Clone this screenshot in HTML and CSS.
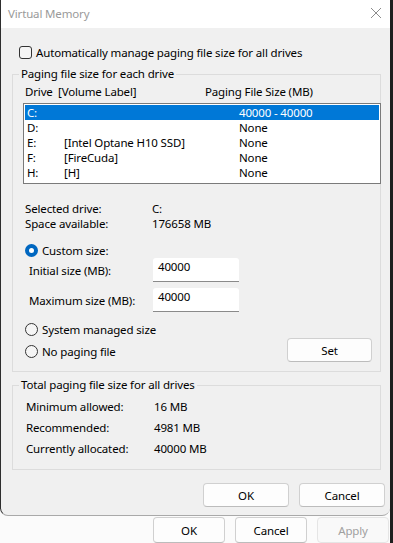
FILE: index.html
```html
<!DOCTYPE html>
<html lang="en">
<head>
    <meta charset="UTF-8">
    <meta name="viewport" content="width=device-width, initial-scale=1.0">
    <title>Virtual Memory</title>
    <link rel="stylesheet" href="styles.css">
</head>
<body>
    <div class="screen">
        <div class="window">
            <div class="dialog">
                <div class="titlebar">
                    <span class="title">Virtual Memory</span>
                    <svg class="close" width="12" height="12" viewBox="0 0 12 12">
                        <path d="M1 1 L11 11 M11 1 L1 11" stroke="#8c8c8c" stroke-width="1" fill="none"/>
                    </svg>
                </div>
                <div class="content">
                    <div class="check-row">
                        <span class="checkbox"></span>
                        <span>Automatically manage paging file size for all drives</span>
                    </div>

                    <fieldset class="group group-drives">
                        <legend>Paging file size for each drive</legend>
                        <div class="list-head">
                            <span class="col-drive">Drive</span>
                            <span class="col-label">[Volume Label]</span>
                            <span class="col-size">Paging File Size (MB)</span>
                        </div>
                        <div class="listbox">
                            <div class="list-row selected">
                                <span class="cell-drive">C:</span>
                                <span class="cell-label"></span>
                                <span class="cell-size">40000 - 40000</span>
                            </div>
                            <div class="list-row">
                                <span class="cell-drive">D:</span>
                                <span class="cell-label"></span>
                                <span class="cell-size">None</span>
                            </div>
                            <div class="list-row">
                                <span class="cell-drive">E:</span>
                                <span class="cell-label">[Intel Optane H10 SSD]</span>
                                <span class="cell-size">None</span>
                            </div>
                            <div class="list-row">
                                <span class="cell-drive">F:</span>
                                <span class="cell-label">[FireCuda]</span>
                                <span class="cell-size">None</span>
                            </div>
                            <div class="list-row">
                                <span class="cell-drive">H:</span>
                                <span class="cell-label">[H]</span>
                                <span class="cell-size">None</span>
                            </div>
                        </div>

                        <div class="info">
                            <div class="info-row"><span class="info-key">Selected drive:</span><span>C:</span></div>
                            <div class="info-row"><span class="info-key">Space available:</span><span>176658 MB</span></div>
                        </div>

                        <div class="radio-row custom">
                            <span class="radio checked"></span>
                            <span>Custom size:</span>
                        </div>
                        <div class="size-row">
                            <span class="size-label">Initial size (MB):</span>
                            <div class="textbox">40000</div>
                        </div>
                        <div class="size-row">
                            <span class="size-label">Maximum size (MB):</span>
                            <div class="textbox">40000</div>
                        </div>

                        <div class="options">
                            <div class="option-list">
                                <div class="radio-row">
                                    <span class="radio"></span>
                                    <span>System managed size</span>
                                </div>
                                <div class="radio-row">
                                    <span class="radio"></span>
                                    <span>No paging file</span>
                                </div>
                            </div>
                            <button class="btn btn-set">Set</button>
                        </div>
                    </fieldset>

                    <fieldset class="group group-total">
                        <legend>Total paging file size for all drives</legend>
                        <div class="total-row"><span class="total-key">Minimum allowed:</span><span>16 MB</span></div>
                        <div class="total-row"><span class="total-key">Recommended:</span><span>4981 MB</span></div>
                        <div class="total-row"><span class="total-key">Currently allocated:</span><span>40000 MB</span></div>
                    </fieldset>

                    <div class="dialog-buttons">
                        <button class="btn btn-dialog">OK</button>
                        <button class="btn btn-dialog">Cancel</button>
                    </div>
                </div>
            </div>

            <div class="parent-buttons">
                <button class="btn btn-parent">OK</button>
                <button class="btn btn-parent">Cancel</button>
                <button class="btn btn-parent disabled">Apply</button>
            </div>
        </div>
        <div class="edge"></div>
    </div>
</body>
</html>
```

FILE: styles.css
```css
body {
    margin: 0;
    font-family: 'Noto Sans', 'Open Sans', sans-serif;
    font-size: 11.5px;
    letter-spacing: -0.15px;
    color: #000;
    background: #fbfbfb;
}

.screen {
    display: flex;
    width: 393px;
    height: 543px;
    overflow: hidden;
}

.window {
    width: 390px;
    display: flex;
    flex-direction: column;
}

.edge {
    width: 3px;
    background: #1e1e1e;
}

/* dialog window */
.dialog {
    height: 519px;
    box-sizing: border-box;
    border-left: 1px solid #2e2e2e;
    border-bottom: 1px solid #a9a9a9;
    border-radius: 0 0 8px 8px;
    background: #f0f0f0;
    overflow: hidden;
}

.titlebar {
    height: 28px;
    background: #fff;
    display: flex;
    align-items: center;
    justify-content: space-between;
    padding: 0 8px 0 7px;
}

.title {
    color: #9a9a9a;
    margin-top: -2px;
}

.close {
    margin-top: -2px;
}

.content {
    padding: 0 5px 0 11px;
}

.check-row {
    display: flex;
    align-items: center;
    height: 16px;
    margin: 16px 0 0 7px;
    gap: 4px;
}

.checkbox {
    width: 11px;
    height: 11px;
    border: 1px solid #333;
    border-radius: 3px;
    background: #f5f5f5;
}

/* group boxes */
.group {
    margin: 6px 4px 0 0;
    padding: 0;
    border: 1px solid #dcdcdc;
    min-width: 0;
}

.group legend {
    margin-left: 6px;
    padding: 0 2px;
    line-height: 16px;
}

.list-head {
    display: flex;
    height: 16px;
    line-height: 16px;
    margin-top: 2px;
    padding-left: 12px;
}

.col-drive {
    width: 33px;
}

.col-label {
    width: 147px;
}

.listbox {
    margin: 3px -1px 0 10px;
    border: 1px solid #7a7a7a;
    background: #fff;
    padding: 1px 1px 3px;
}

.list-row {
    display: flex;
    height: 15px;
    line-height: 15px;
    padding-left: 2px;
}

.list-row.selected {
    background: #0078d7;
    color: #fff;
}

.cell-drive {
    width: 37px;
}

.cell-label {
    width: 175px;
}

.info {
    margin-top: 17px;
    padding-left: 12px;
}

.info-row {
    display: flex;
    height: 15px;
    line-height: 15px;
}

.info-key {
    width: 127px;
}

.radio-row {
    display: flex;
    align-items: center;
    height: 16px;
    padding-left: 12px;
    gap: 4px;
}

.radio-row.custom {
    margin-top: 11px;
}

.radio {
    width: 11px;
    height: 11px;
    border: 1px solid #333;
    border-radius: 50%;
    background: #f5f5f5;
    box-sizing: content-box;
}

.radio.checked {
    width: 5px;
    height: 5px;
    border: 4px solid #0067c0;
    background: #fff;
}

.size-row {
    display: flex;
    align-items: center;
    height: 24px;
    padding-left: 16px;
}

.size-row + .size-row {
    margin-top: 6px;
}

.size-label {
    width: 124px;
}

.textbox {
    width: 81px;
    height: 23px;
    box-sizing: content-box;
    padding-left: 5px;
    line-height: 18px;
    background: #fff;
    border-bottom: 1px solid #8a8a8a;
    border-radius: 3px 3px 0 0;
    align-self: stretch;
}

.options {
    display: flex;
    justify-content: space-between;
    align-items: flex-end;
    margin-top: 9px;
    margin-bottom: 9px;
    padding-right: 8px;
}

.option-list {
    display: flex;
    flex-direction: column;
    gap: 6px;
    padding-bottom: 3px;
}

.btn {
    font-family: inherit;
    font-size: 11.5px;
    letter-spacing: -0.15px;
    color: #000;
    background: #fdfdfd;
    border: 1px solid #d0d0d0;
    border-bottom-color: #bcbcbc;
    border-radius: 4px;
    padding: 0;
    height: 24px;
}

.btn-set {
    width: 85px;
}

.group-total {
    margin-top: 5px;
    padding-bottom: 10px;
}

.total-row {
    display: flex;
    height: 21px;
    line-height: 21px;
    padding-left: 13px;
}

.total-row:first-of-type {
    margin-top: 3px;
}

.total-key {
    width: 128px;
}

.dialog-buttons {
    display: flex;
    justify-content: flex-end;
    gap: 10px;
    margin-top: 13px;
}

.btn-dialog {
    width: 86px;
    height: 24px;
}

/* parent window buttons peeking out below */
.parent-buttons {
    display: flex;
    gap: 10px;
    padding: 1px 0 0 153px;
}

.btn-parent {
    width: 72px;
    height: 26px;
    flex-shrink: 0;
}

.btn-parent.disabled {
    color: #a0a0a0;
    border-color: #e5e5e5;
    background: #f9f9f9;
}
```
